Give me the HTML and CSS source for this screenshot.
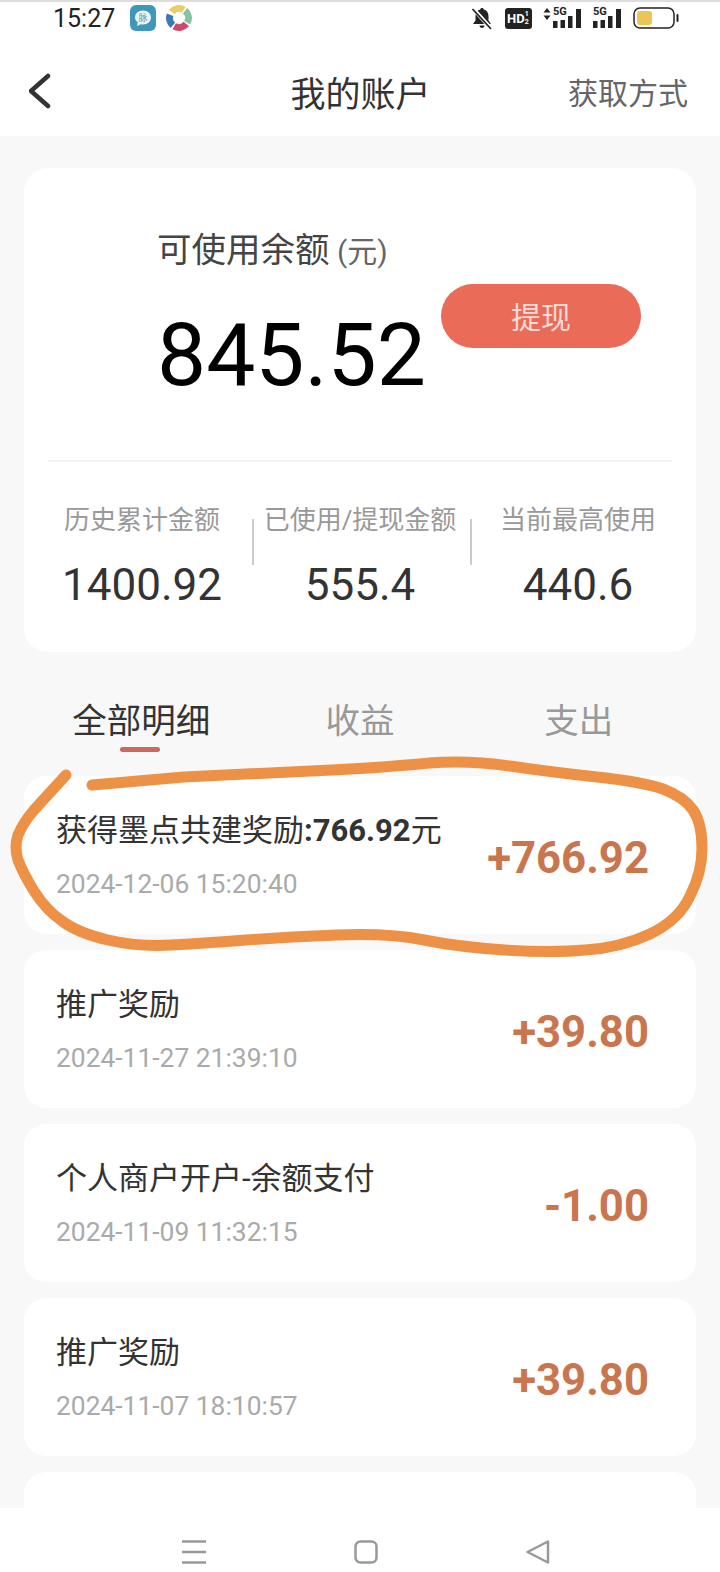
FILE: index.html

```html
<!DOCTYPE html>
<html lang="zh-CN">

<head>
    <meta charset="UTF-8">
    <title>我的账户</title>
    <link rel="stylesheet" href="styles.css">
</head>

<body>
    <div class="page">
        <header class="top">
            <div class="status">
                <div class="status_left">
                    <span class="time">15:27</span>
                    <svg class="app_icon" width="26" height="26" viewBox="0 0 26 26">
                        <rect width="26" height="26" rx="6" fill="#3f97b9"/>
                        <path d="M13 5.500c4.600 0 8 3 8 7s-3.400 7-8 7c-.8 0-1.500-.1-2.200-.3L7 21l.7-3.700C6 16 5 14.400 5 12.500c0-4 3.400-7 8-7z" fill="#e9f4f7"/>
                        <text x="13" y="16" font-size="9" text-anchor="middle" fill="#5a9fb8" font-family="'Noto Sans CJK SC', sans-serif">脉</text>
                    </svg>
                    <svg class="app_icon" width="26" height="28" viewBox="0 0 26 28">
                        <g fill="none" stroke-width="7">
                            <path d="M5.700 7.900A9.500 9.500 0 0 1 17.750 5.800" stroke="#e8cf63"/>
                            <path d="M19.100 6.700A9.500 9.500 0 0 1 21.200 18.750" stroke="#86c49f"/>
                            <path d="M20.300 20.100A9.500 9.500 0 0 1 8.250 22.200" stroke="#cf4a68"/>
                            <path d="M6.900 21.300A9.500 9.500 0 0 1 4.100 10.750" stroke="#3d78b8"/>
                        </g>
                    </svg>
                </div>
                <div class="status_right">
                    <svg width="24" height="24" viewBox="0 0 24 24">
                        <path d="M12 2c1 0 1.700.7 1.700 1.600 3 .7 4.800 3.200 4.800 6.400v4.500l2.500 3.500H3l2.500-3.500V10c0-3.200 1.800-5.700 4.800-6.400C10.300 2.700 11 2 12 2zM9.500 19.500h5c0 1.400-1.100 2.500-2.500 2.500s-2.500-1.100-2.500-2.500z" fill="#222"/>
                        <path d="M3 2.500L21.500 23" stroke="#fff" stroke-width="4"/>
                        <path d="M2.500 3L21 23" stroke="#222" stroke-width="1.800"/>
                    </svg>
                    <span class="hd">HD<span class="hd_frac">1<br>2</span></span>
                    <div class="signal">
                        <svg class="arrows" width="8" height="12" viewBox="0 0 8 12"><path d="M4 0l3.500 4.500h-7zM4 12L.5 7.500h7z" fill="#222"/></svg>
                        <div class="signal_box">
                            <svg width="29" height="20" viewBox="0 0 29 20"><path d="M0 13h4.500v7H0zM7.500 12H12v8H7.500zM15 8h4.500v12H15zM23 1h5v19h-5z" fill="#222"/></svg>
                            <span class="five_g">5G</span>
                        </div>
                    </div>
                    <div class="signal_box">
                        <svg width="29" height="20" viewBox="0 0 29 20"><path d="M0 13h4.500v7H0zM7.500 12H12v8H7.500zM15 8h4.500v12H15zM23 1h5v19h-5z" fill="#222"/></svg>
                        <span class="five_g">5G</span>
                    </div>
                    <svg class="battery" width="46" height="22" viewBox="0 0 46 22">
                        <rect x="1" y="1" width="40" height="20" rx="6" fill="#fff" stroke="#222" stroke-width="1.500"/>
                        <rect x="4" y="4" width="15" height="14" rx="3" fill="#efc457"/>
                        <rect x="43.500" y="7" width="2" height="8" rx="1" fill="#222"/>
                    </svg>
                </div>
            </div>
            <nav class="title_bar">
                <svg class="back" width="26" height="38" viewBox="0 0 26 38">
                    <path d="M19 4L2 19l17 15" fill="none" stroke="#333" stroke-width="4.500" stroke-linecap="round" stroke-linejoin="round"/>
                </svg>
                <h1 class="title">我的账户</h1>
                <a class="how" href="#">获取方式</a>
            </nav>
        </header>

        <main class="content">
            <section class="card">
                <div class="balance">
                    <div>
                        <div class="balance_label">可使用余额<span class="unit"> (元)</span></div>
                        <div class="balance_num">845.52</div>
                    </div>
                    <a class="withdraw" href="#">提现</a>
                </div>
                <div class="stats">
                    <div class="stat">
                        <div class="stat_label">历史累计金额</div>
                        <div class="stat_num">1400.92</div>
                    </div>
                    <i class="stat_sep"></i>
                    <div class="stat">
                        <div class="stat_label">已使用/提现金额</div>
                        <div class="stat_num">555.4</div>
                    </div>
                    <i class="stat_sep"></i>
                    <div class="stat">
                        <div class="stat_label">当前最高使用</div>
                        <div class="stat_num">440.6</div>
                    </div>
                </div>
            </section>

            <ul class="tabs">
                <li class="tab active">全部明细</li>
                <li class="tab">收益</li>
                <li class="tab">支出</li>
            </ul>

            <ul class="records">
                <li class="record">
                    <div>
                        <div class="record_name">获得墨点共建奖励<b>:766.92</b>元</div>
                        <div class="record_date">2024-12-06 15:20:40</div>
                    </div>
                    <div class="record_amount">+766.92</div>
                </li>
                <li class="record">
                    <div>
                        <div class="record_name">推广奖励</div>
                        <div class="record_date">2024-11-27 21:39:10</div>
                    </div>
                    <div class="record_amount">+39.80</div>
                </li>
                <li class="record">
                    <div>
                        <div class="record_name">个人商户开户-余额支付</div>
                        <div class="record_date">2024-11-09 11:32:15</div>
                    </div>
                    <div class="record_amount">-1.00</div>
                </li>
                <li class="record">
                    <div>
                        <div class="record_name">推广奖励</div>
                        <div class="record_date">2024-11-07 18:10:57</div>
                    </div>
                    <div class="record_amount">+39.80</div>
                </li>
                <li class="record"></li>
            </ul>
        </main>

        <footer class="nav_bar">
            <svg width="24" height="24" viewBox="0 0 24 24"><path d="M0 1.500h24M0 12h24M0 22.500h24" stroke="#999" stroke-width="2.500"/></svg>
            <svg width="24" height="24" viewBox="0 0 24 24"><rect x="1.500" y="1.500" width="21" height="21" rx="5" fill="none" stroke="#999" stroke-width="2.500"/></svg>
            <svg width="24" height="24" viewBox="0 0 24 24"><path d="M22 1.500v21L1.500 12z" fill="none" stroke="#999" stroke-width="2.500" stroke-linejoin="round"/></svg>
        </footer>

        <!-- hand drawn circle on top of the screenshot -->
        <svg class="scribble" width="720" height="1572" viewBox="0 0 720 1572">
            <path d="M66 775L34 810Q23 823 18 835Q14 847 18 860Q23 873 34 891Q46 910 62 921Q78 933 108 940Q138 947 172 945Q207 943 246 940Q285 937 337 935Q390 933 424 940Q459 947 505 950Q551 953 585 950Q620 948 650 934Q679 920 690 896Q702 873 702 848Q702 823 693 810Q684 797 663 789Q643 782 597 777Q551 772 510 766Q468 760 429 763Q390 767 332 770Q275 773 184 777L92 785" fill="none" stroke="#ed9146" stroke-width="11" stroke-linecap="round" stroke-linejoin="round"/>
        </svg>
    </div>
</body>

</html>
```

FILE: styles.css

```css
* {
    margin: 0;
    padding: 0;
    box-sizing: border-box;
}

body {
    width: 720px;
    height: 1572px;
    overflow: hidden;
    font-family: Roboto, "Noto Sans CJK SC", sans-serif;
    color: #333;
}

ul {
    list-style: none;
}

a {
    text-decoration: none;
}

.page {
    position: relative;
    width: 720px;
    height: 1572px;
    display: flex;
    flex-direction: column;
    background: #f8f8f8;
    overflow: hidden;
}

/* top */
.top {
    height: 136px;
    background: #fff;
    border-top: 2px solid #ddd;
}

.status {
    height: 30px;
    padding: 2px 41px 0 53px;
    display: flex;
    justify-content: space-between;
    align-items: center;
}

.status_left {
    display: flex;
    align-items: center;
    gap: 10px;
}

.time {
    width: 67px;
    font-size: 25px;
    color: #222;
}

.status_right {
    display: flex;
    align-items: center;
    gap: 11px;
}

.hd {
    display: flex;
    align-items: center;
    width: 27px;
    height: 21px;
    padding-left: 2px;
    border-radius: 3px;
    background: #222;
    color: #fff;
    font-size: 13px;
    font-weight: 700;
    line-height: 1;
}

.hd_frac {
    font-size: 7px;
    line-height: 8px;
}

.signal {
    display: flex;
    align-items: flex-start;
    gap: 2px;
}

.arrows {
    display: block;
}

.signal_box {
    position: relative;
    display: flex;
    width: 29px;
    height: 20px;
}

.five_g {
    position: absolute;
    left: 0;
    top: -2px;
    background: #fff;
    padding-right: 1px;
    font-size: 11px;
    font-weight: 700;
    line-height: 11px;
    color: #222;
}

.title_bar {
    height: 104px;
    padding: 14px 32px 0 29px;
    display: grid;
    grid-template-columns: 1fr auto 1fr;
    align-items: center;
}

.back {
    display: block;
}

.title {
    margin-left: 4px;
    font-size: 35px;
    font-weight: 400;
    color: #333;
}

.how {
    justify-self: end;
    font-size: 30px;
    color: #666;
}

/* card */
.content {
    flex: 1;
    padding: 32px 24px 0;
    overflow: hidden;
}

.card {
    height: 484px;
    padding: 0 24px;
    background: #fff;
    border-radius: 24px;
}

.balance {
    height: 294px;
    padding: 57px 0 0 109px;
    display: flex;
    align-items: flex-start;
    gap: 15px;
    border-bottom: 2px solid #f2f2f2;
}

.balance_label {
    font-size: 34.500px;
    line-height: 50px;
    color: #444;
    white-space: nowrap;
}

.unit {
    font-size: 30px;
    color: #666;
}

.balance_num {
    margin-top: 28px;
    font-size: 87.500px;
    line-height: 100px;
    color: #000;
    white-space: nowrap;
}

.withdraw {
    margin-top: 59px;
    flex-shrink: 0;
    width: 200px;
    height: 64px;
    border-radius: 32px;
    background: #e96b58;
    color: #f9dcd5;
    font-size: 30px;
    line-height: 67px;
    text-align: center;
}

.stats {
    margin: 0 -14px;
    padding-top: 38px;
    display: grid;
    grid-template-columns: 1fr 2px 1fr 2px 1fr;
}

.stat {
    text-align: center;
}

.stat_label {
    font-size: 26px;
    line-height: 40px;
    color: #999;
    white-space: nowrap;
}

.stat_num {
    margin-top: 19px;
    font-size: 44px;
    line-height: 52px;
    color: #333;
}

.stat_sep {
    height: 46px;
    margin-top: 19px;
    background: #ccc;
    transform: translateX(2px);
}

/* tabs */
.tabs {
    height: 124px;
    padding: 44px 8px 0;
    display: flex;
}

.tab {
    flex: 1;
    text-align: center;
    font-size: 34.500px;
    line-height: 50px;
    color: #999;
}

.active {
    position: relative;
    color: #333;
}

.active::after {
    content: "";
    position: absolute;
    left: 88px;
    top: 51px;
    width: 40px;
    height: 5px;
    border-radius: 3px;
    background: #cb6a5c;
}

/* records */
.records {
    display: flex;
    flex-direction: column;
    gap: 16px;
}

.record {
    height: 158px;
    padding: 0 47px 0 32px;
    display: flex;
    justify-content: space-between;
    align-items: center;
    background: #fff;
    border-radius: 22px;
    flex-shrink: 0;
}

.record_name {
    font-size: 31px;
    line-height: 44px;
    color: #333;
}

.record_date {
    margin-top: 13px;
    font-size: 26.400px;
    line-height: 36px;
    color: #aaa;
}

.record_amount {
    margin-top: 5px;
    font-size: 43.700px;
    font-weight: 700;
    color: #c9764f;
}

/* bottom nav */
.nav_bar {
    position: relative;
    height: 64px;
    flex-shrink: 0;
    padding: 32px 170px 0 182px;
    display: flex;
    justify-content: space-between;
    align-items: flex-start;
    background: #fff;
}

.scribble {
    position: absolute;
    left: 0;
    top: 0;
    pointer-events: none;
}
```
